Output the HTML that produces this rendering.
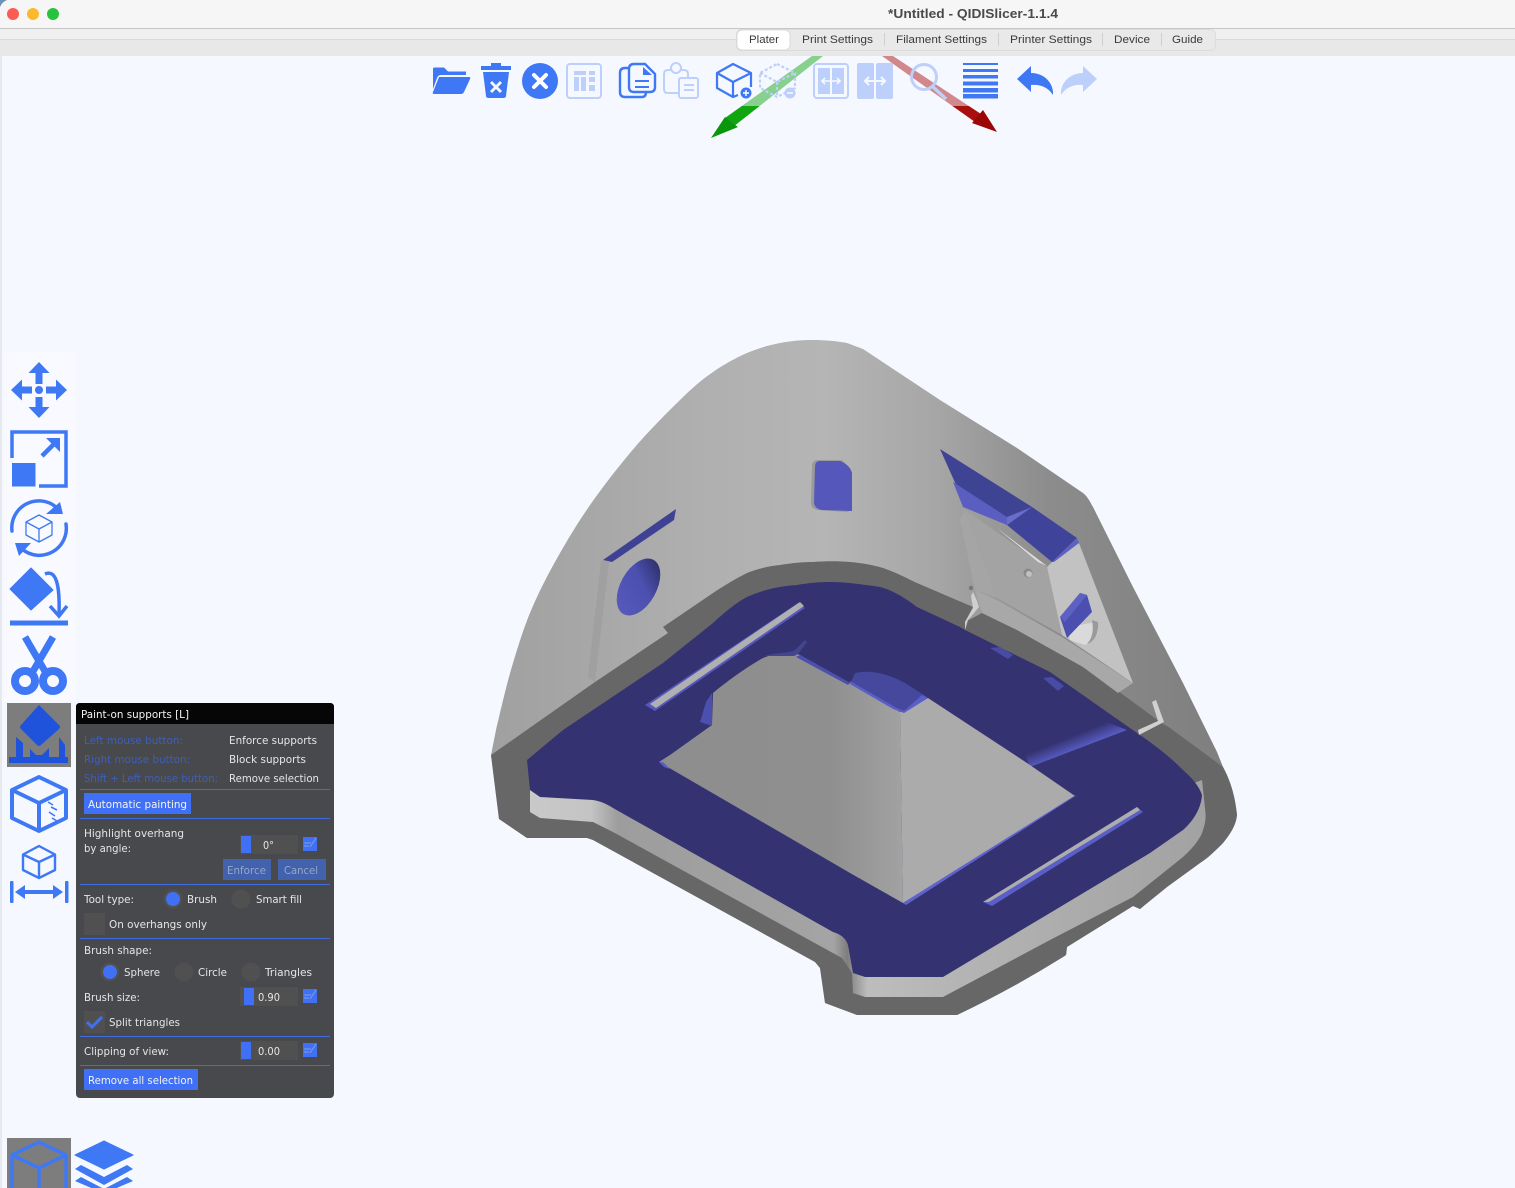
<!DOCTYPE html>
<html><head><meta charset="utf-8"><title>QIDISlicer</title>
<style>
html,body{margin:0;padding:0;width:1515px;height:1188px;overflow:hidden;background:#f5f8ff}
svg{position:absolute;left:0;top:0;display:block}
.t{font-family:"DejaVu Sans","Liberation Sans",sans-serif;font-size:10.5px;fill:#e6e6e6}
.w{fill:#f4f4f4}
.b{fill:#3f5fb8}
.tab{font-family:"Liberation Sans",sans-serif;font-size:11px;fill:#3a3a3a}
</style></head><body>
<svg width="1515" height="1188" viewBox="0 0 1515 1188" xmlns="http://www.w3.org/2000/svg">
<defs>
<linearGradient id="shell" x1="490" y1="0" x2="1235" y2="0" gradientUnits="userSpaceOnUse">
<stop offset="0" stop-color="#a0a0a0"/><stop offset=".3" stop-color="#b0b0b0"/><stop offset=".45" stop-color="#b5b5b5"/><stop offset=".6" stop-color="#a6a6a6"/><stop offset=".75" stop-color="#8c8c8c"/><stop offset="1" stop-color="#7e7e7e"/>
</linearGradient>
<linearGradient id="ledge" x1="530" y1="0" x2="1205" y2="0" gradientUnits="userSpaceOnUse">
<stop offset="0" stop-color="#c9c9c9"/><stop offset=".09" stop-color="#c4c4c4"/><stop offset=".13" stop-color="#9d9d9d"/><stop offset=".45" stop-color="#a4a4a4"/><stop offset=".47" stop-color="#7e7e7e"/><stop offset=".5" stop-color="#bdbdbd"/><stop offset=".62" stop-color="#b5b5b5"/><stop offset="1" stop-color="#a2a2a2"/>
</linearGradient>
<linearGradient id="pyrL" x1="660" y1="0" x2="903" y2="0" gradientUnits="userSpaceOnUse">
<stop offset="0" stop-color="#8e8e8e"/><stop offset=".7" stop-color="#8f8f8f"/><stop offset="1" stop-color="#a2a2a2"/>
</linearGradient>
<linearGradient id="hole" x1="625" y1="610" x2="655" y2="565" gradientUnits="userSpaceOnUse">
<stop offset="0" stop-color="#5659bb"/><stop offset=".6" stop-color="#4b4fae"/><stop offset="1" stop-color="#30336f"/>
</linearGradient>
<linearGradient id="bstrip" x1="1075" y1="752" x2="1069" y2="737" gradientUnits="userSpaceOnUse">
<stop offset="0" stop-color="#5c60cc"/><stop offset="1" stop-color="#343270"/>
</linearGradient>
</defs>

<!-- window chrome -->
<rect width="1515" height="1188" fill="#f5f8ff"/>
<rect x="0" y="56" width="2" height="1132" fill="#e6e9f0"/>
<rect width="1515" height="28" fill="#f6f6f6"/>
<rect y="28" width="1515" height="1" fill="#c6c6c6"/>
<rect y="29" width="1515" height="10" fill="#efefef"/>
<rect y="39" width="1515" height="1" fill="#dadada"/>
<rect y="40" width="1515" height="16" fill="#e8e8e8"/>
<path d="M0,0H7Q2,2 0,7Z" fill="#6b93b8"/>
<circle cx="13" cy="14" r="6" fill="#fc5b55"/>
<circle cx="33" cy="14" r="6" fill="#fdb92e"/>
<circle cx="53" cy="14" r="6" fill="#27c23f"/>
<text x="888" y="18" textLength="170" lengthAdjust="spacingAndGlyphs" font-family="Liberation Sans,sans-serif" font-size="13" font-weight="bold" fill="#4a4a4a">*Untitled - QIDISlicer-1.1.4</text>
<rect x="736.5" y="29.5" width="479" height="21" rx="5" fill="#e9e9e9" stroke="#dcdcdc"/>
<rect x="737" y="30" width="53" height="20" rx="5" fill="#fff" stroke="#d2d2d2" stroke-width=".7"/>
<g class="tab">
<text class="tab" x="749" y="43" textLength="30" lengthAdjust="spacingAndGlyphs">Plater</text>
<text class="tab" x="802" y="43" textLength="71" lengthAdjust="spacingAndGlyphs">Print Settings</text>
<text class="tab" x="896" y="43" textLength="91" lengthAdjust="spacingAndGlyphs">Filament Settings</text>
<text class="tab" x="1010" y="43" textLength="82" lengthAdjust="spacingAndGlyphs">Printer Settings</text>
<text class="tab" x="1114" y="43" textLength="36" lengthAdjust="spacingAndGlyphs">Device</text>
<text class="tab" x="1172" y="43" textLength="31" lengthAdjust="spacingAndGlyphs">Guide</text>
</g>
<g fill="#cfcfcf"><rect x="884" y="33" width="1" height="13"/><rect x="998" y="33" width="1" height="13"/><rect x="1102" y="33" width="1" height="13"/><rect x="1161" y="33" width="1" height="13"/></g>

<!-- axes -->
<path d="M812,56 L823,56 L733,127 L725,118 Z" fill="#12a512"/>
<path d="M711,138 L725,117 L731,122 L738,127 Z" fill="#0a960a"/>
<path d="M882,56 L893,56 L981,114 L975,122 Z" fill="#a81010"/>
<path d="M997,132 L983,110 L977,117 L972,123 Z" fill="#9c0606"/>
<rect x="428" y="56" width="677" height="50" fill="#f6f8ff" opacity=".52"/>

<!-- top toolbar icons -->
<g fill="#3f78f5">
<path d="M433,69 a1.5,1.5 0 0 1 1.5,-1.5 H444 L448,71.5 H466 V75 H441 Q438,75 437,78 L433,89 Z"/>
<path d="M439,77 H469 Q471,77 470,79 L464,92 Q463,94 461,94 H434 Q432,94 433,92 Z" />
<path d="M491,63 H501 V66 H511 V70 H481 V66 H491 Z"/>
<path fill-rule="evenodd" d="M483,72 H509 L506,96 Q506,98 503,98 H489 Q486,98 486,96 Z M492,81 L490,83 L494,87 L490,91 L492,93 L496,89 L500,93 L502,91 L498,87 L502,83 L500,81 L496,85 Z"/>
<circle cx="540" cy="81" r="18"/>
</g>
<path d="M534,75 L546,87 M546,75 L534,87" stroke="#fff" stroke-width="4" stroke-linecap="round"/>
<g fill="none" stroke="#bdd0fb" stroke-width="2">
<rect x="567" y="64" width="34" height="34" rx="3"/>
</g>
<g fill="#bdd0fb">
<rect x="574" y="71" width="12" height="4"/><rect x="589" y="71" width="6" height="4"/><rect x="574" y="77" width="5" height="14"/><rect x="581" y="77" width="5" height="14"/><rect x="589" y="77" width="6" height="5"/><rect x="589" y="85" width="6" height="6"/>
</g>
<!-- copy -->
<g fill="none" stroke="#3f78f5" stroke-width="2.4">
<path d="M628,68 H625 Q620,68 620,73 V92 Q620,97 625,97 H642 Q646,97 646,92"/>
<path d="M634,64 H645 L655,74 V87 Q655,92 650,92 H634 Q629,92 629,87 V69 Q629,64 634,64 Z" fill="#f6f8ff"/>
<path d="M635,81 H649 M635,87 H649" stroke-width="2"/>
</g>
<path d="M643,67 L643,75 H652 Z" fill="#3f78f5"/>
<!-- paste -->
<g fill="none" stroke="#bdd0fb" stroke-width="2">
<path d="M680,70 H684 Q688,70 688,74 V78 M678,93 H668 Q664,93 664,89 V74 Q664,70 668,70 H671"/>
<circle cx="676" cy="68" r="5"/>
<rect x="679" y="78" width="19" height="20" rx="2"/>
<path d="M684,85 H694 M684,90 H694"/>
</g>
<!-- add cube -->
<g fill="none" stroke="#3f78f5" stroke-width="2.2" stroke-linejoin="round">
<path d="M738,95 L733,97 L717,88 V73 L733,64 L751,73 V87"/>
<path d="M717,73 L733,82 L751,73 M733,82 V97"/>
</g>
<circle cx="746" cy="93" r="5.5" fill="#3f78f5"/>
<path d="M743,93H749M746,90V96" stroke="#fff" stroke-width="1.4"/>
<!-- del cube -->
<g fill="none" stroke="#bdd0fb" stroke-width="2.2" stroke-dasharray="3 2">
<path d="M777,64 L795,73 V88 L777,97 L760,88 V73 Z M760,73 L777,82 L795,73 M777,82 V97"/>
</g>
<circle cx="790" cy="93" r="5.5" fill="#bdd0fb"/>
<path d="M787,93H793" stroke="#fff" stroke-width="1.4"/>
<!-- split objects -->
<rect x="814" y="64" width="34" height="34" rx="3" fill="none" stroke="#bdd0fb" stroke-width="2"/>
<rect x="818" y="68" width="12" height="26" fill="#bdd0fb"/><rect x="832" y="68" width="12" height="26" fill="#bdd0fb"/>
<path d="M822,81H840M825,78l-3,3 3,3M837,78l3,3-3,3" stroke="#f6f8ff" stroke-width="1.6" fill="none"/>
<!-- split parts -->
<rect x="857" y="63" width="17" height="36" rx="2" fill="#bdd0fb"/><rect x="876" y="63" width="17" height="36" rx="2" fill="#bdd0fb"/>
<path d="M865,81H885M869,77l-4,4 4,4M881,77l4,4-4,4" stroke="#f6f8ff" stroke-width="2" fill="none"/>
<!-- search -->
<circle cx="924" cy="77" r="12.5" fill="none" stroke="#bdd0fb" stroke-width="3"/>
<path d="M933,87 L946,99" stroke="#bdd0fb" stroke-width="3.5"/>
<!-- layers -->
<g fill="#3f78f5">
<rect x="963" y="63" width="35" height="2"/><rect x="963" y="69" width="35" height="3"/><rect x="963" y="75" width="35" height="3.5"/><rect x="963" y="81.5" width="35" height="4"/><rect x="963" y="88" width="35" height="4.5"/><rect x="963" y="94" width="35" height="4.5"/>
</g>
<!-- undo/redo -->
<path d="M1017,79 L1031,66 V73 C1045,73 1054,84 1053,95 C1048,87 1040,84 1031,85 V92 Z" fill="#3f78f5"/>
<path d="M1097,79 L1083,66 V73 C1069,73 1060,84 1061,95 C1066,87 1074,84 1083,85 V92 Z" fill="#bdd0fb"/>

<!-- left toolbar -->
<rect x="4" y="352" width="72" height="350" fill="#f8faff"/>
<g fill="#3f78f5">
<!-- move -->
<circle cx="39" cy="390" r="4"/>
<path d="M39,362 L49.5,373 H42.5 V384 H35.5 V373 H28.5 Z"/>
<path d="M39,418 L49.5,407 H42.5 V397 H35.5 V407 H28.5 Z"/>
<path d="M11,390 L22,379.5 V386.5 H32 V393.5 H22 V400.5 Z"/>
<path d="M67,390 L56,379.5 V386.5 H46 V393.5 H56 V400.5 Z"/>
<!-- scale -->
<rect x="12" y="463" width="23.5" height="23.5"/>
<path d="M39,486 H66 V432 H12 V458" fill="none" stroke="#3f78f5" stroke-width="3.5"/>
<path d="M42,456 L54,444" fill="none" stroke="#3f78f5" stroke-width="4.5"/>
<path d="M46,438 H60 V452 Z"/>
</g>
<!-- rotate -->
<g fill="none" stroke="#3f78f5" stroke-width="3.5" stroke-linecap="round">
<path d="M12,531 A27,27 0 0 1 56,507"/>
<path d="M66,524 A27,27 0 0 1 22,549"/>
</g>
<path d="M63,514 L46,514 L60,502 Z M15,543 L31,543 L19,556 Z" fill="#3f78f5"/>
<g fill="none" stroke="#3f78f5" stroke-width="1.3" stroke-linejoin="round">
<path d="M39,515 L52,522 V535 L39,542 L26,535 V522 Z M26,522 L39,529 L52,522 M39,529 V542"/>
</g>
<!-- lay on face -->
<path d="M31,568 L53,590 L31,610 L10,589 Z" fill="#3f78f5" stroke="#3f78f5" stroke-linejoin="round" stroke-width="1"/>
<rect x="10" y="620.5" width="58" height="5" fill="#3f78f5"/>
<path d="M45,574 C56,569 60,585 59,614" fill="none" stroke="#3f78f5" stroke-width="3.5"/>
<path d="M50,606 L59,616 L67,606" fill="none" stroke="#3f78f5" stroke-width="3.5"/>
<!-- scissors -->
<g fill="none" stroke="#3f78f5">
<path d="M25,637 L46,673" stroke-width="7"/>
<path d="M53,637 L32,673" stroke-width="7"/>
<circle cx="25" cy="681" r="10" stroke-width="8"/>
<circle cx="53" cy="681" r="10" stroke-width="8"/>
</g>
<!-- paint active -->
<rect x="7" y="703" width="64" height="64" fill="#7d7d7d"/>
<path d="M39,705 L59,725 Q61,727 59,729 L41,745 Q39,747 37,745 L21,729 Q19,727 21,725 Z" fill="#1f53db"/>
<path d="M9,763 V757 H16 V737 L23,743 V757 H30 V749 L36,755 H42 L49,748 V757 H59 V737 L65,745 V757 H68 V763 Z" fill="#1f53db"/>
<!-- support cube -->
<g fill="none" stroke="#3f78f5" stroke-width="4" stroke-linejoin="round">
<path d="M39,777 L66,790 V818 L39,831 L12,818 V790 Z M12,790 L39,803 L66,790 M39,803 V831"/>
</g>
<path d="M48,802l5,3M51,807l6,3M49,812l6,4M52,818l5,3" stroke="#3f78f5" stroke-width="1.6"/>
<!-- measure -->
<g fill="none" stroke="#3f78f5" stroke-width="2.4" stroke-linejoin="round">
<path d="M39,846 L55,854.5 V870 L39,878 L23,870 V854.5 Z M23,854.5 L39,862 L55,854.5 M39,862 V878"/>
</g>
<rect x="10" y="881" width="3.5" height="22" rx="1" fill="#3f78f5"/><rect x="65" y="881" width="3.5" height="22" rx="1" fill="#3f78f5"/>
<path d="M15,892 L25,885 V890 H53 V885 L63,892 L53,899 V894 H25 V899 Z" fill="#3f78f5"/>

<!-- bottom -->
<rect x="7" y="1138" width="64" height="50" fill="#7d7d7d"/>
<g fill="none" stroke="#3f78f5" stroke-width="3.5" stroke-linejoin="round">
<path d="M39,1142 L66,1155 V1190 H12 V1155 Z M12,1155 L39,1168 L66,1155 M39,1168 V1190"/>
</g>
<path d="M104,1141 L133,1155 L104,1169 L75,1155 Z" fill="#3f78f5" stroke="#3f78f5" stroke-linejoin="round"/>
<path d="M81,1165 L104,1177 L127,1165 L133,1169 L104,1185 L75,1169 Z" fill="#3f78f5"/>
<path d="M81,1177 L104,1189 L127,1177 L133,1181 L112,1190 H96 L75,1181 Z" fill="#3f78f5"/>

<!-- 3D MODEL -->
<path d="M491,755 L496,730 C499.7,714.7 506.2,685.2 513,663 C519.8,640.8 525.8,620.8 537,597 C548.2,573.2 564.5,544 580,520 C595.5,496 613.3,473 630,453 C646.7,433 666.2,413.5 680,400 C693.8,386.5 701.8,379.8 713,372 C724.2,364.2 735.8,357.8 747,353 C758.2,348.2 769,345.2 780,343 C791,340.8 801.8,340 813,340 C824.2,340 838.7,341.3 847,343 L863,349 L940,400 L1017,448 L1083,493 C1088,497 1090,502 1093,507 L1133,587 L1183,683 L1217,752 L1223,767 C1230,780 1235,795 1237,815 C1236,825 1231,833 1223,843 C1215,851 1208,858 1200,863 L1167,887 L1140,909 L1133,906 L1067,947 L1066,955 L1063,957 Q1010,990 957,1015 H857 L825,1003 L820,968 L815,962 L593,840 L587,838 H527 L499,819 Z" fill="url(#shell)"/>

<!-- wall end face -->
<path d="M491,755 L595,682 L668,633 L663,627 L713,593 C725,585 737,578 747,573 C760,568 770,566 780,565 C792,563 803,562 813,562 C826,561 838,561 850,562 C862,563 873,565 883,568 C895,572 906,578 917,583 L973,607 L965,622 L982,613 L1017,630 L1083,667 C1110,685 1135,703 1160,722 L1170,728 L1223,767 C1230,780 1235,795 1237,815 C1236,825 1231,833 1223,843 C1215,851 1208,858 1200,863 L1167,887 L1140,909 L1133,906 L1067,947 L1066,955 L1063,957 Q1010,990 957,1015 H857 L825,1003 L820,968 L815,962 L593,840 L587,838 H527 L499,819 Z" fill="#676767"/>

<!-- ledge -->
<path d="M530,780 L530,812 L540,818 L593,822 L613,832 L842,958 L852,973 L853,993 L865,997 H943 L1050,940 L1133,897 L1183,857 C1193,848 1201,838 1203,830 C1206,822 1206,815 1205,808 L1202,780 L1150,800 L700,750 Z" fill="url(#ledge)"/>

<!-- blue floor -->
<path d="M527,760 L563,730 L663,663 L713,623 C725,612 737,602 747,597 C762,590 780,586 797,585 C808,583 820,582 830,582 C845,582 860,584 880,587 C892,590 905,598 917,607 L960,627 L965,630 L1050,672 L1137,733 C1155,745 1170,757 1183,770 C1192,778 1199,786 1202,795 C1201,810 1192,822 1183,830 L1150,853 L1050,913 L983,953 L943,977 H865 L853,973 L848,945 C846,938 840,934 833,932 L613,808 C607,804 600,801 593,800 L540,797 L530,790 Z" fill="#343270"/>

<path d="M990,648 L1000,647 L1013,655 L1008,659 Z M1043,678 L1052,677 L1064,686 L1058,691 Z" fill="#484ca4"/>

<!-- blue strip -->
<path d="M1025,755 L1107,722 L1127,730 L1030,767 Z" fill="url(#bstrip)"/>

<!-- pyramid -->
<path d="M659,762 L670,755 L712,725 L713,693 C725,683 745,668 763,658 C775,653 790,651 800,655 L850,683 L900,712 L903,903 L880,890 L850,873 L790,838 Z" fill="url(#pyrL)"/>
<path d="M900,712 L928,698 L1027,763 L1075,796 L903,903 Z" fill="#ababab"/>
<path d="M659,762 L663,762 L670,769 L664,767 Z" fill="#5a5ec4"/>
<path d="M903,903 L1074,796 L1077,795 L906,905 Z" fill="#5f63cf"/>
<path d="M712,693 L706,702 C704,708 702,716 700,722 L712,726 Z" fill="#4a4fb0"/>
<path d="M800,655 L850,683 L848,685 L796,657 Z" fill="#4a4fb0"/>
<!-- bump near apex -->
<path d="M855,673 C868,670 885,672 905,683 L927,697 L904,711 L893,706 L851,682 Z" fill="#45489c"/>
<path d="M850,681 L895,707 L904,711 L922,695 L928,698 L904,713 L893,709 L850,684 Z" fill="#5a5ec6"/>
<path d="M765,656 C775,652 788,654 795,650 L805,640 L807,642 L798,654 L794,656 Z" fill="#43468f"/>

<!-- floor slots -->
<path d="M645,705 L655,711 L805,608 L798,603 Z" fill="#5458c0"/>
<path d="M650,704 L656,708 L804,606 L800,602 Z" fill="#b0b0b0"/>
<path d="M983,902 L992,906 L1143,812 L1137,807 Z" fill="#5a5ec8"/>
<path d="M983,902 L989,902 L1140,810 L1137,807 Z" fill="#adadad"/>

<!-- shell details left -->
<path d="M601,560 L609,562 L595,682 L588,677 Z" fill="#a0a0a0"/>
<path d="M603,560 L676,509 L674,520 L612,562 Z" fill="#3f4294"/>
<ellipse cx="638.5" cy="587" rx="18" ry="31" transform="rotate(29 638.5 587)" fill="url(#hole)"/>
<path d="M812,466 Q812,460 818,460 H842 L851,470 V507 Q851,512 846,512 L818,510 Q811,509 811,503 Z" fill="#9a9a9a"/>
<path d="M815,467 Q815,461 820,461 H840 C846,463 851,468 852,473 V511 L822,510 Q815,509 814,503 Z" fill="#5557bb"/>

<!-- right recess -->
<path d="M975,590 L997,600 L1062,637 L1133,683 L1118,693 L1083,667 L1017,630 L982,613 Z" fill="#a8a8a8"/>
<path d="M965,510 L1047,567 L1062,635 L997,598 Z" fill="#a3a3a3"/>
<path d="M1047,567 L1077,538 L1133,683 L1062,635 Z" fill="#c2c2c2"/>
<path d="M965,510 L997,598 L975,590 L960,520 Z" fill="#a5a5a5"/>
<path d="M940,449 L1032,507 L1007,525 L957,487 Z" fill="#3f4393"/>
<path d="M1032,507 L1077,538 L1052,562 L1007,525 Z" fill="#40439a"/>
<path d="M953,482 L1007,517 L1007,525 L963,507 Z" fill="#5a5ec0"/>
<path d="M1007,517 L1032,507 L1007,525 Z" fill="#6a6ecb"/>
<path d="M1077,538 L1079,543 L1054,562 L1052,562 Z" fill="#5d61c0"/>
<path d="M997,528 L1047,566 L1038,562 Z" fill="#dcdcdc"/>
<circle cx="1028" cy="573" r="4.5" fill="#8a8a8a"/><circle cx="1029" cy="574" r="3" fill="#c0c0c0"/>
<path d="M1068,626 C1086,626 1097,618 1098,627 C1099,636 1093,642 1085,645 L1070,640 Z" fill="#dadada"/>
<path d="M1098,622 C1099,636 1093,642 1087,644 C1092,638 1094,632 1092,620 Z" fill="#9a9a9a"/>
<path d="M1060,617 L1080,593 L1087,595 L1092,612 L1067,638 Z" fill="#4a4fb0"/>
<path d="M1060,617 L1080,593 L1087,595 L1065,622 Z" fill="#5d61c4"/>

<!-- corner marks -->
<path d="M973,592 L977,601 L979,607 L968,620 L965,630 L965,622 L973,608 L971,596 Z" fill="#cfcfcf"/>
<circle cx="971" cy="588" r="2.2" fill="#777"/>
<path d="M1152,702 L1156,700 L1164,722 L1139,735 L1138,730 L1158,721 Z" fill="#d0d0d0"/>

<!-- PANEL -->
<rect x="76" y="703" width="258" height="395" rx="4" fill="#48494c"/>
<path d="M76,724 V707 Q76,703 80,703 H330 Q334,703 334,707 V724 Z" fill="#060606"/>
<text class="t w" x="81" y="718" textLength="108" lengthAdjust="spacingAndGlyphs">Paint-on supports [L]</text>
<text class="t b" x="84" y="744" textLength="99" lengthAdjust="spacingAndGlyphs">Left mouse button:</text>
<text class="t b" x="84" y="763" textLength="106" lengthAdjust="spacingAndGlyphs">Right mouse button:</text>
<text class="t b" x="84" y="782" textLength="134" lengthAdjust="spacingAndGlyphs">Shift + Left mouse button:</text>
<text class="t" x="229" y="744" textLength="88" lengthAdjust="spacingAndGlyphs">Enforce supports</text>
<text class="t" x="229" y="763" textLength="77" lengthAdjust="spacingAndGlyphs">Block supports</text>
<text class="t" x="229" y="782" textLength="90" lengthAdjust="spacingAndGlyphs">Remove selection</text>
<g fill="#3f6ce0">
<rect x="80" y="789" width="250" height="1"/><rect x="80" y="818" width="250" height="1"/><rect x="80" y="884" width="250" height="1"/><rect x="80" y="938" width="250" height="1"/><rect x="80" y="1036" width="250" height="1"/><rect x="80" y="1065" width="250" height="1"/>
</g>
<rect x="84" y="793" width="107" height="21" fill="#3f70f5"/>
<text class="t w" x="88" y="808" textLength="99" lengthAdjust="spacingAndGlyphs">Automatic painting</text>
<text class="t" x="84" y="837" textLength="100" lengthAdjust="spacingAndGlyphs">Highlight overhang</text>
<text class="t" x="84" y="852" textLength="47" lengthAdjust="spacingAndGlyphs">by angle:</text>
<rect x="240" y="835" width="58" height="19" fill="#505050"/><rect x="241" y="836" width="10" height="17" fill="#3f70f5"/>
<text class="t" x="263" y="849" textLength="11" lengthAdjust="spacingAndGlyphs">0°</text>
<rect x="303" y="837" width="14" height="14" fill="#3f70f5"/><path d="M304,843H311M304,846H309M310,847L316,838" stroke="#7f9fe8" stroke-width="1" fill="none"/>
<rect x="223" y="859" width="48" height="21" fill="#4262ad"/><rect x="278" y="859" width="48" height="21" fill="#4262ad"/>
<text class="t" x="227" y="874" textLength="39" lengthAdjust="spacingAndGlyphs" style="fill:#98a6c8">Enforce</text>
<text class="t" x="284" y="874" textLength="34" lengthAdjust="spacingAndGlyphs" style="fill:#98a6c8">Cancel</text>
<text class="t" x="84" y="903" textLength="50" lengthAdjust="spacingAndGlyphs">Tool type:</text>
<circle cx="173" cy="899" r="9.5" fill="#505050"/><circle cx="173" cy="899" r="7" fill="#3f70f5"/>
<text class="t" x="187" y="903" textLength="30" lengthAdjust="spacingAndGlyphs">Brush</text>
<circle cx="241" cy="899" r="9.5" fill="#505050"/>
<text class="t" x="256" y="903" textLength="46" lengthAdjust="spacingAndGlyphs">Smart fill</text>
<rect x="84" y="913" width="21" height="22" fill="#505050"/>
<text class="t" x="109" y="928" textLength="98" lengthAdjust="spacingAndGlyphs">On overhangs only</text>
<text class="t" x="84" y="954" textLength="68" lengthAdjust="spacingAndGlyphs">Brush shape:</text>
<circle cx="110" cy="972" r="9.5" fill="#505050"/><circle cx="110" cy="972" r="7" fill="#3f70f5"/>
<text class="t" x="124" y="976" textLength="36" lengthAdjust="spacingAndGlyphs">Sphere</text>
<circle cx="184" cy="972" r="9.5" fill="#505050"/>
<text class="t" x="198" y="976" textLength="29" lengthAdjust="spacingAndGlyphs">Circle</text>
<circle cx="251" cy="972" r="9.5" fill="#505050"/>
<text class="t" x="265" y="976" textLength="47" lengthAdjust="spacingAndGlyphs">Triangles</text>
<text class="t" x="84" y="1001" textLength="56" lengthAdjust="spacingAndGlyphs">Brush size:</text>
<rect x="240" y="987" width="58" height="19" fill="#505050"/><rect x="244" y="988" width="10" height="17" fill="#3f70f5"/>
<text class="t" x="258" y="1001" textLength="22" lengthAdjust="spacingAndGlyphs">0.90</text>
<rect x="303" y="989" width="14" height="14" fill="#3f70f5"/><path d="M304,995H311M304,998H309M310,999L316,990" stroke="#7f9fe8" stroke-width="1" fill="none"/>
<rect x="84" y="1011" width="21" height="22" fill="#505050"/>
<path d="M87,1022 L92,1027 L102,1017" fill="none" stroke="#3f70f5" stroke-width="3"/>
<text class="t" x="109" y="1026" textLength="71" lengthAdjust="spacingAndGlyphs">Split triangles</text>
<text class="t" x="84" y="1055" textLength="85" lengthAdjust="spacingAndGlyphs">Clipping of view:</text>
<rect x="240" y="1041" width="58" height="19" fill="#505050"/><rect x="241" y="1042" width="10" height="17" fill="#3f70f5"/>
<text class="t" x="258" y="1055" textLength="22" lengthAdjust="spacingAndGlyphs">0.00</text>
<rect x="303" y="1043" width="14" height="14" fill="#3f70f5"/><path d="M304,1049H311M304,1052H309M310,1053L316,1044" stroke="#7f9fe8" stroke-width="1" fill="none"/>
<rect x="84" y="1069" width="114" height="21" fill="#3f70f5"/>
<text class="t w" x="88" y="1084" textLength="105" lengthAdjust="spacingAndGlyphs">Remove all selection</text>
</svg>
</body></html>
